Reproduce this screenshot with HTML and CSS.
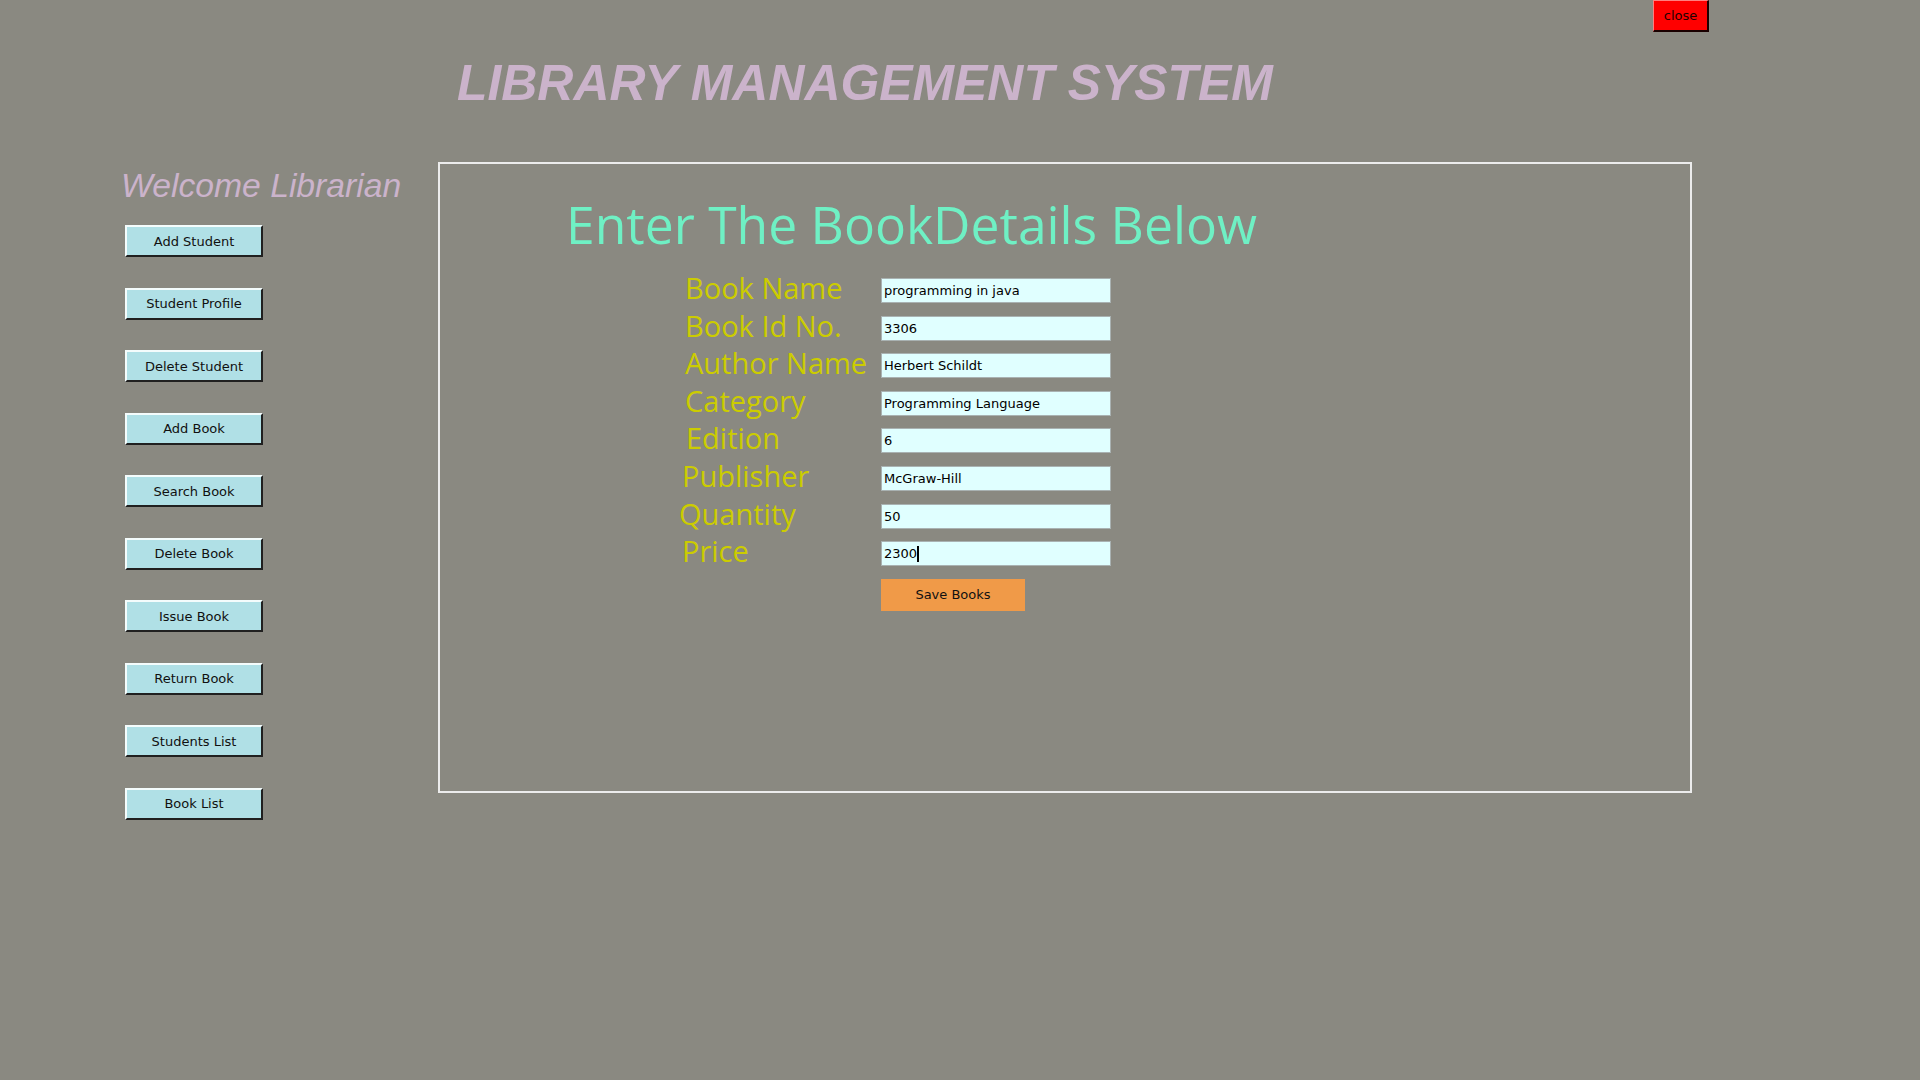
FILE: index.html
```html
<!DOCTYPE html>
<html>
<head>
<meta charset="utf-8">
<title>Library Management System</title>
<link rel="stylesheet" href="styles.css">
</head>
<body>
<div class="topbar">
  <button class="close-btn">close</button>
</div>
<h1 class="title">LIBRARY MANAGEMENT SYSTEM</h1>
<div class="main">
  <aside class="sidebar">
    <div class="welcome">Welcome Librarian</div>
    <div class="menu">
      <button class="menu-btn">Add Student</button>
      <button class="menu-btn">Student Profile</button>
      <button class="menu-btn">Delete Student</button>
      <button class="menu-btn">Add Book</button>
      <button class="menu-btn">Search Book</button>
      <button class="menu-btn">Delete Book</button>
      <button class="menu-btn">Issue Book</button>
      <button class="menu-btn">Return Book</button>
      <button class="menu-btn">Students List</button>
      <button class="menu-btn">Book List</button>
    </div>
  </aside>
  <section class="panel">
    <h2 class="heading">Enter The BookDetails Below</h2>
    <div class="form">
      <div class="row"><span class="label">Book Name</span><input class="field" value="programming in java"></div>
      <div class="row"><span class="label">Book Id No.</span><input class="field" value="3306"></div>
      <div class="row"><span class="label">Author Name</span><input class="field" value="Herbert Schildt"></div>
      <div class="row"><span class="label">Category</span><input class="field" value="Programming Language"></div>
      <div class="row"><span class="label shift-r">Edition</span><input class="field" value="6"></div>
      <div class="row"><span class="label shift-l">Publisher</span><input class="field" value="McGraw-Hill"></div>
      <div class="row"><span class="label shift-ll">Quantity</span><input class="field" value="50"></div>
      <div class="row"><span class="label shift-l">Price</span><div class="field active">2300<span class="caret"></span></div></div>
      <div class="row save-row"><span class="label"></span><button class="save-btn">Save Books</button></div>
    </div>
  </section>
</div>
</body>
</html>
```
FILE: styles.css
```css
* { box-sizing: border-box; }
html, body { margin: 0; padding: 0; }
body {
  background: #8a8981;
  width: 1920px;
  height: 1080px;
  overflow: hidden;
  font-family: "DejaVu Sans", sans-serif;
}
.topbar {
  display: flex;
  justify-content: flex-end;
  padding-right: 211px;
  height: 32px;
}
.close-btn {
  width: 56px;
  height: 32px;
  background: #ff0000;
  border: none;
  border-top: 1px solid #ff8080;
  border-left: 1px solid #ff8080;
  border-right: 2px solid #1a0000;
  border-bottom: 2px solid #1a0000;
  font-family: "DejaVu Sans", sans-serif;
  font-size: 13px;
  color: #220000;
  padding: 0;
}
.title {
  margin: 21px 0 0 457px;
  font-family: "Liberation Sans", Arial, sans-serif;
  font-style: italic;
  font-weight: bold;
  font-size: 49.9px;
  line-height: 60px;
  color: #cbb3cb;
}
.main {
  display: flex;
  margin-top: 49px;
}
.sidebar {
  width: 438px;
  padding-left: 121px;
}
.welcome {
  font-family: "Liberation Sans", Arial, sans-serif;
  font-style: italic;
  font-size: 33.7px;
  line-height: 40px;
  color: #cbb3cb;
  margin-top: 3px;
}
.menu {
  display: flex;
  flex-direction: column;
  gap: 30.5px;
  padding-left: 4px;
  margin-top: 20px;
}
.menu-btn {
  width: 138px;
  height: 32px;
  background: #b0e0e6;
  border: none;
  border-top: 2px solid #f4fcfc;
  border-left: 2px solid #f4fcfc;
  border-right: 2px solid #202020;
  border-bottom: 2px solid #202020;
  font-family: "DejaVu Sans", sans-serif;
  font-size: 13px;
  color: #101010;
  padding: 0;
}
.panel {
  width: 1254px;
  height: 631px;
  border: 2px solid #ececec;
  padding: 0;
}
.heading {
  margin: 28px 0 0 126px;
  font-family: "Open Sans", sans-serif;
  font-weight: normal;
  font-size: 51.6px;
  line-height: 64px;
  color: #6ff0c4;
  white-space: nowrap;
}
.form {
  margin-top: 22px;
  margin-left: 245px;
  display: flex;
  flex-direction: column;
  gap: 12.6px;
}
.row {
  display: flex;
  align-items: center;
  height: 25px;
}
.label {
  width: 196px;
  font-family: "Open Sans", sans-serif;
  font-size: 29px;
  line-height: 25px;
  color: #cccc00;
  white-space: nowrap;
  margin-bottom: 6px;
}
.shift-r { padding-left: 1px; }
.shift-l { margin-left: -3px; width: 199px; }
.shift-ll { margin-left: -6px; width: 202px; }
.field {
  width: 230px;
  height: 25px;
  background: #e0ffff;
  border: 1px solid #a9b2b2;
  font-family: "DejaVu Sans", sans-serif;
  font-size: 13px;
  color: #000;
  padding: 0 2px;
  outline: none;
  display: flex;
  align-items: center;
}
.caret {
  display: inline-block;
  width: 2px;
  height: 16px;
  background: #000;
}
.save-row { height: 32px; }
.save-btn {
  width: 144px;
  height: 32px;
  background: #f09a48;
  border: none;
  font-family: "DejaVu Sans", sans-serif;
  font-size: 13px;
  color: #111;
  padding: 0;
}
```
